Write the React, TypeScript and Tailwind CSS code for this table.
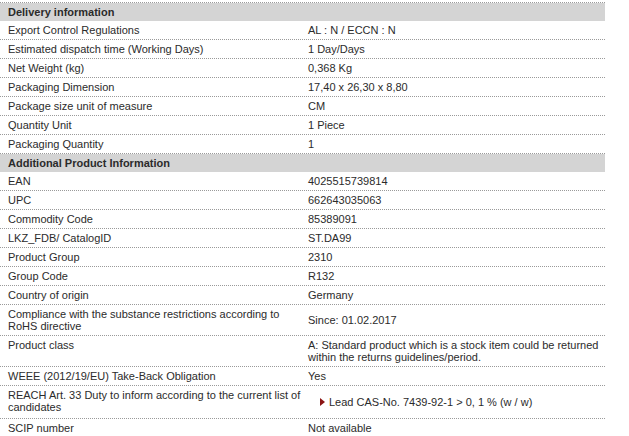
import React from "react";

type Row = { label: string; value: React.ReactNode; tall?: boolean };

const delivery: Row[] = [
  { label: "Export Control Regulations", value: "AL : N / ECCN : N" },
  { label: "Estimated dispatch time (Working Days)", value: "1 Day/Days" },
  { label: "Net Weight (kg)", value: "0,368 Kg" },
  { label: "Packaging Dimension", value: "17,40 x 26,30 x 8,80" },
  { label: "Package size unit of measure", value: "CM" },
  { label: "Quantity Unit", value: "1 Piece" },
  { label: "Packaging Quantity", value: "1" },
];

const additional: Row[] = [
  { label: "EAN", value: "4025515739814" },
  { label: "UPC", value: "662643035063" },
  { label: "Commodity Code", value: "85389091" },
  { label: "LKZ_FDB/ CatalogID", value: "ST.DA99" },
  { label: "Product Group", value: "2310" },
  { label: "Group Code", value: "R132" },
  { label: "Country of origin", value: "Germany" },
  {
    label: "Compliance with the substance restrictions according to RoHS directive",
    value: "Since: 01.02.2017",
  },
  {
    label: "Product class",
    value: "A: Standard product which is a stock item could be returned within the returns guidelines/period.",
  },
  { label: "WEEE (2012/19/EU) Take-Back Obligation", value: "Yes" },
  {
    label: "REACH Art. 33 Duty to inform according to the current list of candidates",
    tall: true,
    value: (
      <div className="flex items-center pl-[12px]">
        <svg width="5" height="8" viewBox="0 0 5 8" className="mr-[4px] shrink-0">
          <polygon points="0,0 5,4 0,8" fill="#8b1414" />
        </svg>
        <span>Lead CAS-No. 7439-92-1 &gt; 0, 1 % (w / w)</span>
      </div>
    ),
  },
  { label: "SCIP number", value: "Not available" },
];

function Header({ title }: { title: string }) {
  return (
    <div className="h-[18px] bg-[#d4d4d4] pl-[8px] pt-[3px] font-bold text-[#2b2b2b]">{title}</div>
  );
}

function DataRow({ row }: { row: Row }) {
  return (
    <div className="flex border-b border-dotted border-[#9a9a9a]">
      <div className="w-[303px] shrink-0 self-start pl-[8px] pr-[1px] py-[3px]">{row.label}</div>
      <div className={"flex-1 self-center pl-[5px] " + (row.tall ? "py-[10px]" : "py-[3px]")}>{row.value}</div>
    </div>
  );
}

export default function App() {
  return (
    <div className="min-h-[436px] bg-white pt-[2px]">
      <div
        className="w-[605px] border-t border-dotted border-[#9a9a9a] text-[11px] leading-[12px] text-[#2b2b2b]"
        style={{ fontFamily: '"Liberation Sans", Arial, sans-serif' }}
      >
        <Header title="Delivery information" />
        {delivery.map((r) => (
          <DataRow key={r.label} row={r} />
        ))}
        <Header title="Additional Product Information" />
        {additional.map((r) => (
          <DataRow key={r.label} row={r} />
        ))}
      </div>
    </div>
  );
}
